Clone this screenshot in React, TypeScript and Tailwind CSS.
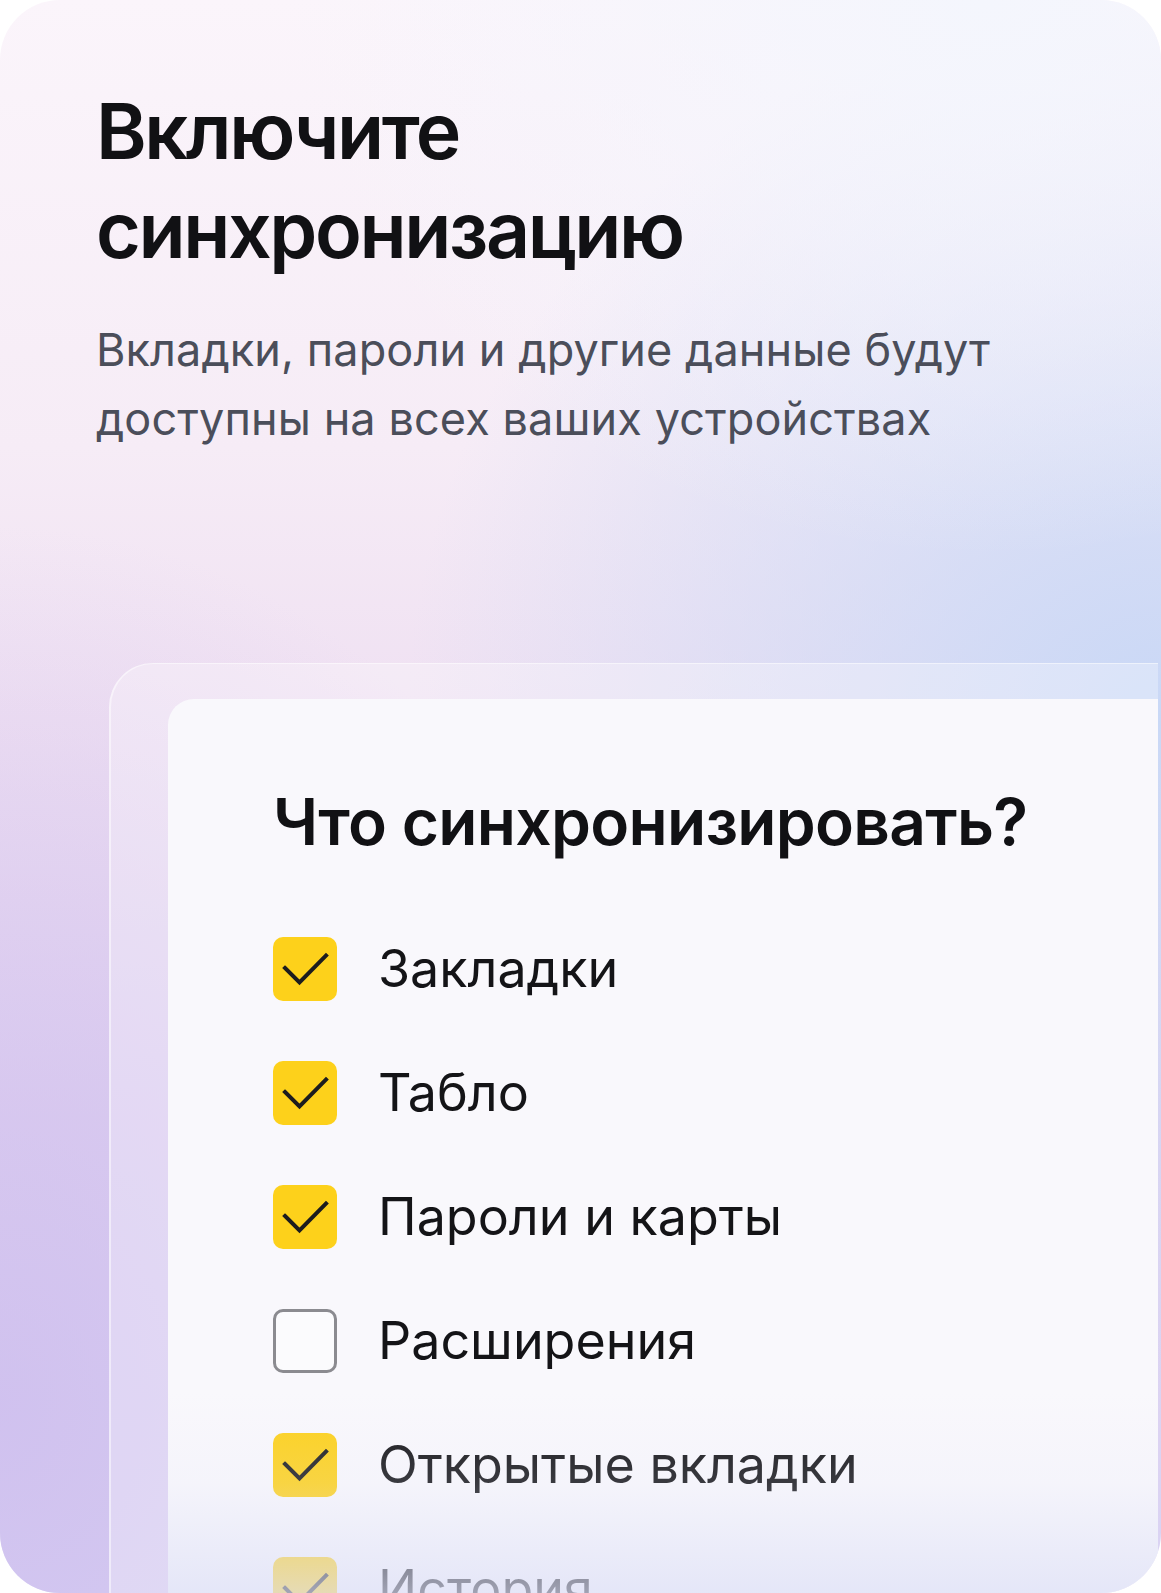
import React from "react";

type Item = { label: string; checked: boolean };

const items: Item[] = [
  { label: "Закладки", checked: true },
  { label: "Табло", checked: true },
  { label: "Пароли и карты", checked: true },
  { label: "Расширения", checked: false },
  { label: "Открытые вкладки", checked: true },
  { label: "История", checked: true },
];

function Check() {
  return (
    <svg width="64" height="64" viewBox="0 0 64 64" fill="none">
      <path d="M12 31 L26.5 45.5 L53 18.5" stroke="#1c1c1e" strokeWidth="4" strokeLinecap="square" strokeLinejoin="miter" />
    </svg>
  );
}

export default function App() {
  return (
    <div className="w-[1161px] h-[1593px] bg-white">
      <div className="relative w-[1161px] h-[1593px] overflow-hidden rounded-[60px] font-['Inter','Noto_Sans',sans-serif]">
        <div className="absolute inset-0 bg-[linear-gradient(180deg,#fbf5fb_0%,#f6ecf6_28%,#efe0f2_45%,#e2d3f0_70%,#d9d3f3_100%)]" />
        <div className="absolute inset-0 bg-[radial-gradient(ellipse_60%_55%_at_0%_88%,#cdbdeeCC_0%,#cdbdee00_100%)]" />
        <div className="absolute inset-0 bg-[radial-gradient(ellipse_65%_45%_at_100%_45%,#c9d8f6_0%,#c9d8f600_100%)]" />
        <div className="absolute inset-0 bg-[radial-gradient(ellipse_60%_35%_at_85%_0%,#f4f6fd_0%,#f4f6fd00_100%)]" />

        <div className="relative">
          <div className="pt-[82px] pl-[96px]">
            <h1 className="text-[77px] leading-[99px] font-semibold text-[#111114] tracking-[-2.4px]">
              Включите
              <br />
              синхронизацию
            </h1>
            <p className="mt-[35px] text-[45px] leading-[69px] text-[#4b4e5a] tracking-[0.1px]">
              Вкладки, пароли и другие данные будут
              <br />
              доступны на всех ваших устройствах
            </p>
          </div>

          <div className="mt-[210px] ml-[109px] mr-[3px] rounded-tl-[44px] bg-white/30 border-l-2 border-t border-white/50 pt-[35px] pl-[57px] h-[940px]">
            <div className="relative rounded-tl-[26px] bg-[#f9f8fc] pl-[105px] pt-[84px] h-[900px]">
              <h2 className="text-[64px] leading-[78px] font-semibold text-[#111114] tracking-[-0.7px]">
                Что синхронизировать?
              </h2>
              <div className="mt-[46px] flex flex-col">
                {items.map((it) => (
                  <div key={it.label} className="h-[124px] flex items-center gap-[41px]">
                    {it.checked ? (
                      <div className="w-[64px] h-[64px] rounded-[10px] bg-[#fdd11b] flex items-center justify-center">
                        <Check />
                      </div>
                    ) : (
                      <div className="w-[64px] h-[64px] rounded-[10px] border-[3px] border-[#8b8b90] bg-white/40" />
                    )}
                    <span className="text-[52px] leading-[64px] text-[#141417]">{it.label}</span>
                  </div>
                ))}
              </div>
            </div>
          </div>
        </div>

        <div className="absolute left-[168px] right-[3px] bottom-0 h-[200px] bg-[linear-gradient(180deg,#e6e6f800_0%,#e2e3f72e_45%,#dcdff6b3_100%)]" />
      </div>
    </div>
  );
}
